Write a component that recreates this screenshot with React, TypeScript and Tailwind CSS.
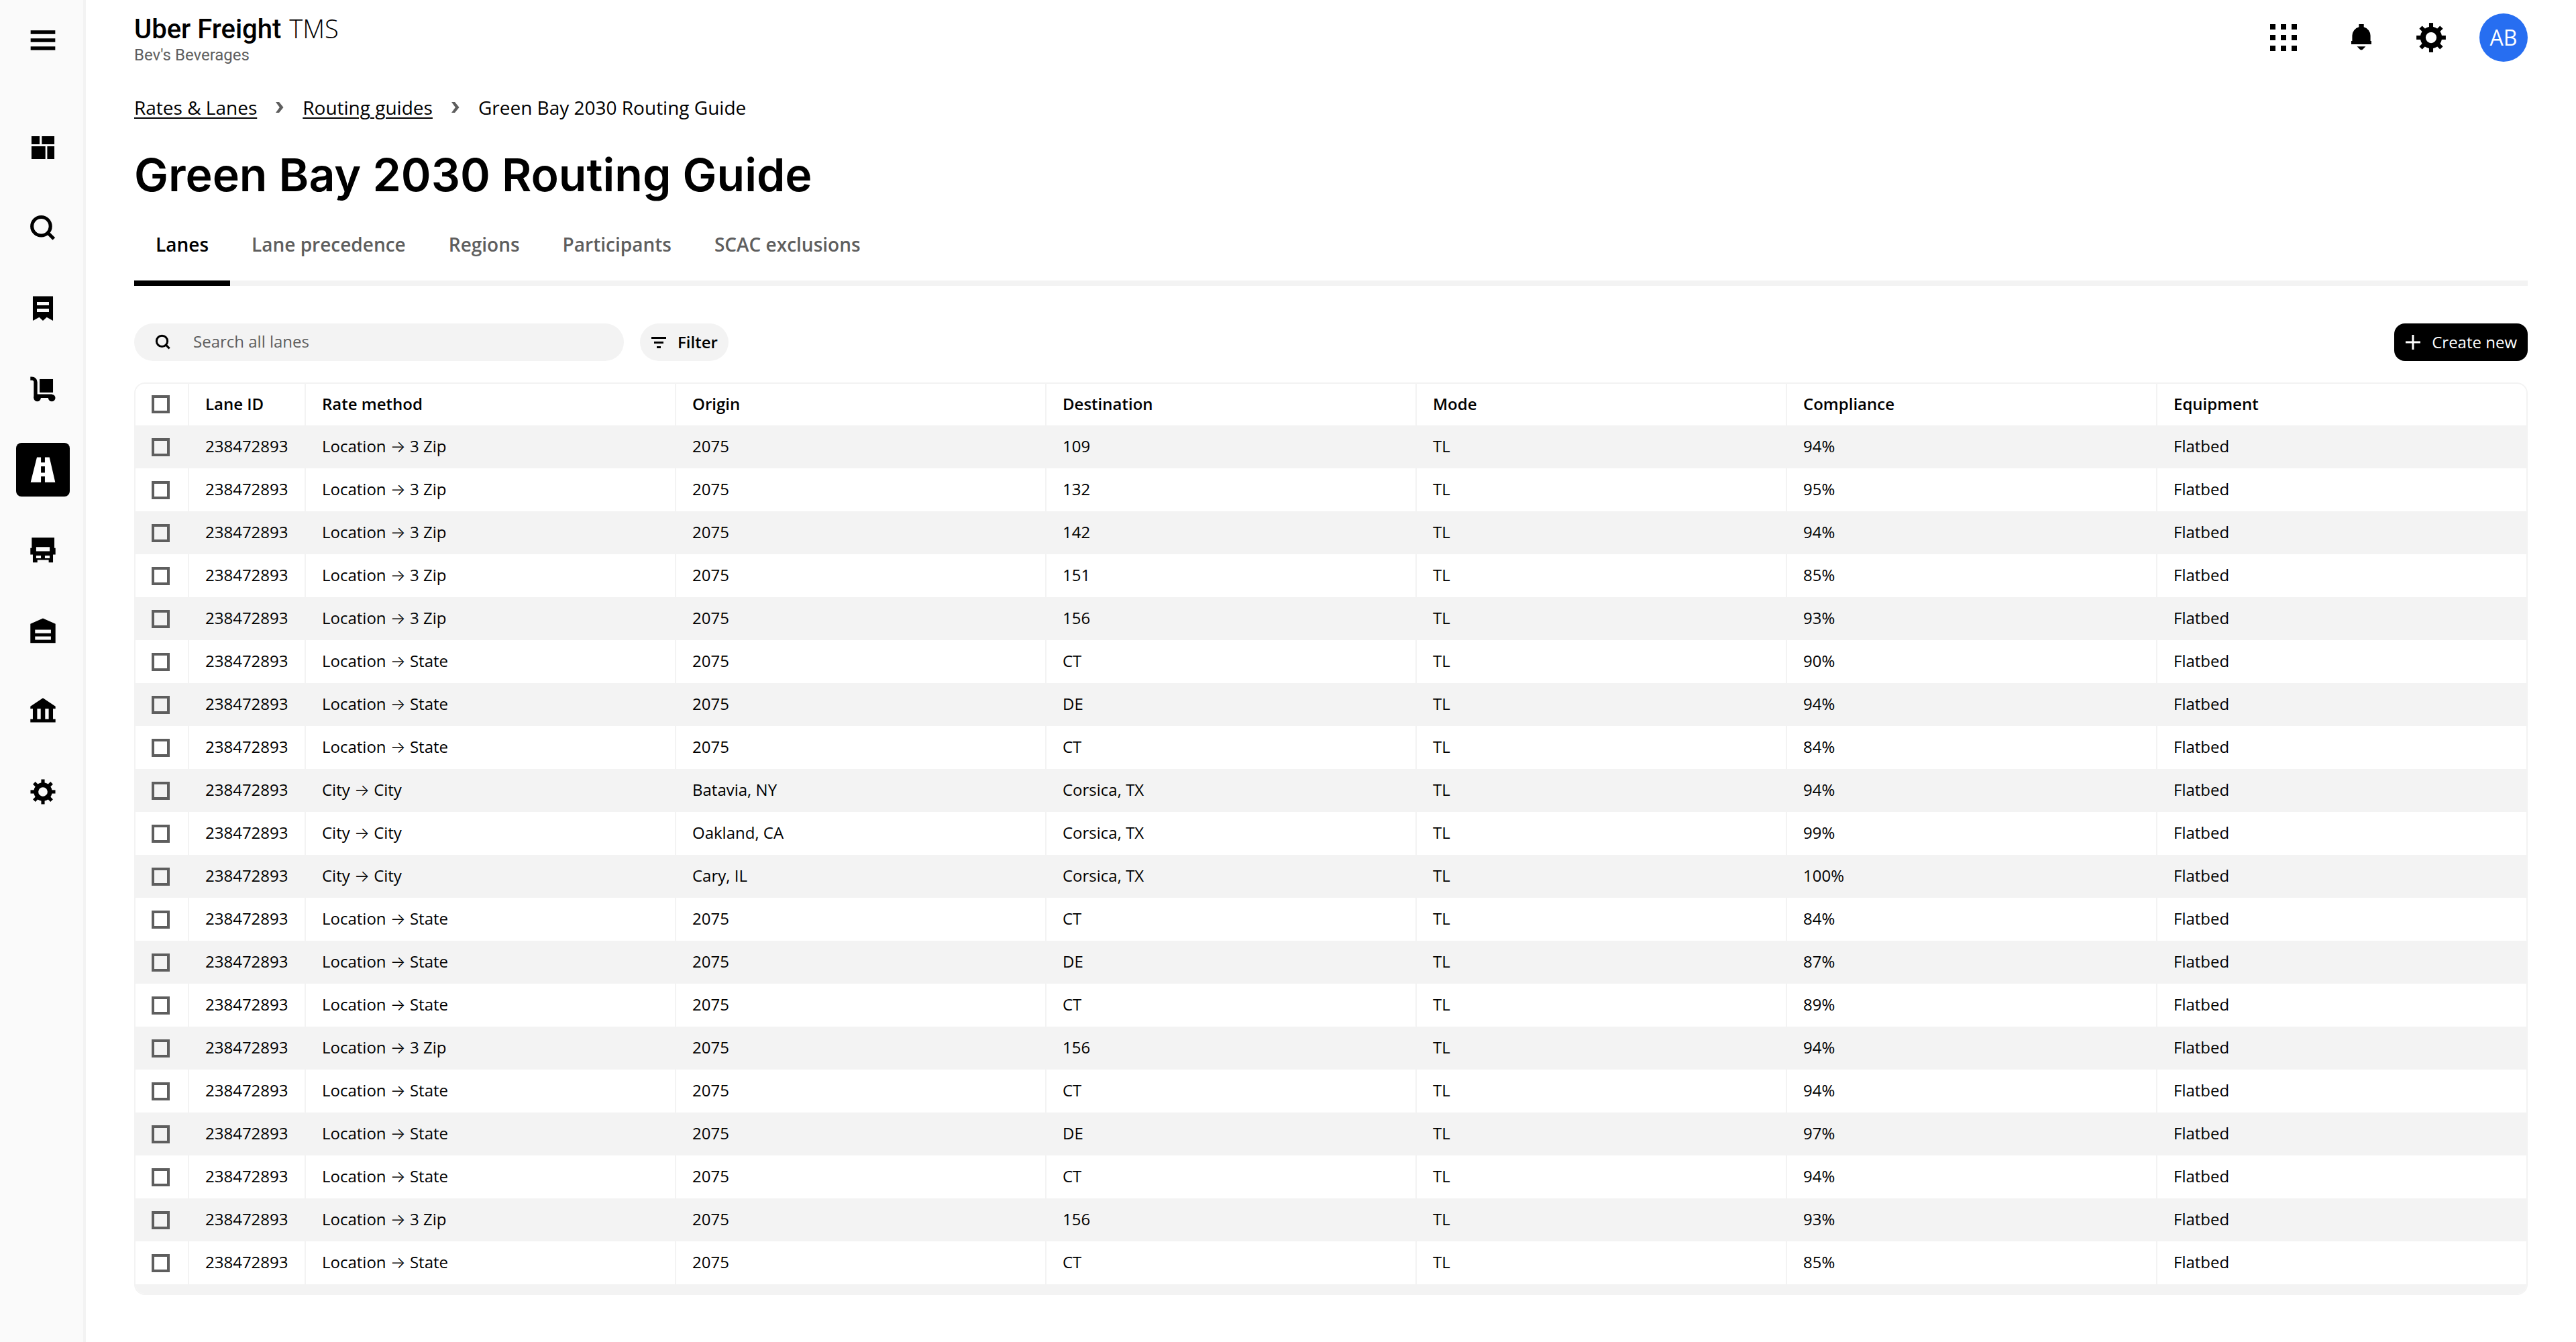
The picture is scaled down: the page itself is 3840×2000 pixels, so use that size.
import type { ReactNode } from "react";

type Lane = {
  method: [string, string];
  origin: string;
  destination: string;
  compliance: string;
};

const LANE_ID = "238472893";
const ZIP: [string, string] = ["Location", "3 Zip"];
const STATE: [string, string] = ["Location", "State"];
const CITY: [string, string] = ["City", "City"];

const lanes: Lane[] = [
  { method: ZIP, origin: "2075", destination: "109", compliance: "94%" },
  { method: ZIP, origin: "2075", destination: "132", compliance: "95%" },
  { method: ZIP, origin: "2075", destination: "142", compliance: "94%" },
  { method: ZIP, origin: "2075", destination: "151", compliance: "85%" },
  { method: ZIP, origin: "2075", destination: "156", compliance: "93%" },
  { method: STATE, origin: "2075", destination: "CT", compliance: "90%" },
  { method: STATE, origin: "2075", destination: "DE", compliance: "94%" },
  { method: STATE, origin: "2075", destination: "CT", compliance: "84%" },
  { method: CITY, origin: "Batavia, NY", destination: "Corsica, TX", compliance: "94%" },
  { method: CITY, origin: "Oakland, CA", destination: "Corsica, TX", compliance: "99%" },
  { method: CITY, origin: "Cary, IL", destination: "Corsica, TX", compliance: "100%" },
  { method: STATE, origin: "2075", destination: "CT", compliance: "84%" },
  { method: STATE, origin: "2075", destination: "DE", compliance: "87%" },
  { method: STATE, origin: "2075", destination: "CT", compliance: "89%" },
  { method: ZIP, origin: "2075", destination: "156", compliance: "94%" },
  { method: STATE, origin: "2075", destination: "CT", compliance: "94%" },
  { method: STATE, origin: "2075", destination: "DE", compliance: "97%" },
  { method: STATE, origin: "2075", destination: "CT", compliance: "94%" },
  { method: ZIP, origin: "2075", destination: "156", compliance: "93%" },
  { method: STATE, origin: "2075", destination: "CT", compliance: "85%" },
];

const columns = ["Lane ID", "Rate method", "Origin", "Destination", "Mode", "Compliance", "Equipment"];
const tabs = ["Lanes", "Lane precedence", "Regions", "Participants", "SCAC exclusions"];

function Icon({ className, children }: { className: string; children: ReactNode }) {
  return (
    <svg viewBox="0 0 24 24" className={className} fill="currentColor" aria-hidden="true">
      {children}
    </svg>
  );
}

function SearchShape() {
  return (
    <>
      <circle cx="10.6" cy="10.5" r="7.5" fill="none" stroke="currentColor" strokeWidth="2.8" />
      <path d="M15.6 15.4 20.9 20.7" stroke="currentColor" strokeWidth="2.8" />
    </>
  );
}

function GearShape() {
  return (
    <>
      <circle cx="12" cy="12" r="5.6" fill="none" stroke="currentColor" strokeWidth="3.7" />
      {[0, 45, 90, 135, 180, 225, 270, 315].map((angle) => (
        <rect key={angle} x="10.6" y="1.9" width="2.8" height="4" transform={`rotate(${angle} 12 12)`} />
      ))}
    </>
  );
}

const navItems: { label: string; active?: boolean; shape: ReactNode }[] = [
  {
    label: "Dashboard",
    shape: <path d="M2.7 2.7h6.6v6.6H2.7zM11.1 2.7h10.2v6.6H11.1zM2.7 10.9H14v10.4H2.7zM15.5 10.9h5.8v10.4h-5.8z" />,
  },
  { label: "Search", shape: <SearchShape /> },
  {
    label: "Invoices",
    shape: (
      <path
        fillRule="evenodd"
        d="M3.8 1.9h16.4v19.9l-5.1-2.8L12 21.8 9 19l-5.2 2.8zM7.1 6.5v2.8h9.8V6.5zM7.1 12v2.7h9.8V12z"
      />
    ),
  },
  {
    label: "Shipments",
    shape: (
      <>
        <path d="M1.8 3.3H3a3 3 0 0 1 3 3v11.3h13.3" fill="none" stroke="currentColor" strokeWidth="2.9" />
        <rect x="9.3" y="3.8" width="10.9" height="10.9" />
        <circle cx="7.4" cy="19.1" r="2.9" />
        <circle cx="19.2" cy="19.1" r="2.9" />
      </>
    ),
  },
  {
    label: "Rates & Lanes",
    active: true,
    shape: <path d="M7.1 1.9h3.3v4.3h3.2V1.9h3.7L22 22.2h-8.4v-4.7h-3.2v4.7H2zM10.4 9.3v5.1h3.2V9.3z" fillRule="evenodd" />,
  },
  {
    label: "Carriers",
    shape: (
      <path
        fillRule="evenodd"
        d="M2.9 1.8h18.4v8.4h.9v5.4h-2v6.3h-3.5v-2H7.5v2H3.8v-6.3h-2v-5.4h1.1zM6.5 9.4v3.4h11V9.4zM6.5 16.3v2.3h3.9v-2.3zM13.6 16.3v2.3h3.9v-2.3z"
      />
    ),
  },
  {
    label: "Facilities",
    shape: (
      <path fillRule="evenodd" d="M12 1.9l10.2 4.5V22H1.8V6.4zM5.6 11.2V14h12.9v-2.8zM5.6 16.6v2.8h12.9v-2.8z" />
    ),
  },
  {
    label: "Finance",
    shape: (
      <path
        fillRule="evenodd"
        d="M12 1.2l10.2 6.9V10h-2v8.4h2V21H1.8v-2.6h2V10h-2V8.1zM7.3 10v8.4h2.9V10zM13.8 10v8.4h2.9V10z"
      />
    ),
  },
  { label: "Settings", shape: <GearShape /> },
];

function Sidebar() {
  return (
    <aside className="flex w-32 shrink-0 flex-col items-center gap-20 border-r-4 border-[#f3f3f3] bg-[#fafafa] pt-5 pl-1">
      <button aria-label="Menu" className="flex size-20 items-center justify-center">
        <Icon className="size-11">
          <path d="M2 4h20v3H2zM2 10.5h20v3H2zM2 17h20v3H2z" />
        </Icon>
      </button>
      <nav className="flex flex-col gap-10">
        {navItems.map((item) =>
          item.active ? (
            <a key={item.label} href="#" aria-label={item.label} aria-current="page" className="flex size-20 items-center justify-center rounded-lg bg-black text-white">
              <Icon className="size-11">{item.shape}</Icon>
            </a>
          ) : (
            <a key={item.label} href="#" aria-label={item.label} className="flex size-20 items-center justify-center rounded-lg">
              <Icon className="size-11">{item.shape}</Icon>
            </a>
          ),
        )}
      </nav>
    </aside>
  );
}

function TopBar() {
  return (
    <header className="flex items-start justify-between">
      <div className="pt-[18px] font-['Roboto',sans-serif]">
        <div className="flex items-baseline gap-3 text-[40px] leading-[48px]">
          <span className="font-medium">Uber Freight</span>
          <span className="font-['Open_Sans',sans-serif] text-[38px] leading-[48px] font-light">TMS</span>
        </div>
        <div className="text-2xl leading-7 text-[#5e5e5e]">Bev's Beverages</div>
      </div>
      <div className="flex items-center pt-5">
        <button aria-label="Apps" className="flex size-12 items-center justify-center">
          <svg viewBox="0 0 40 40" className="size-10" fill="currentColor" aria-hidden="true">
            {[0, 16, 32].map((y) => [0, 16, 32].map((x) => <rect key={`${x}-${y}`} x={x} y={y} width="8" height="8" />))}
          </svg>
        </button>
        <button aria-label="Notifications" className="ml-17 flex size-12 items-center justify-center">
          <svg viewBox="0 0 48 48" className="size-12" fill="currentColor" aria-hidden="true">
            <path d="M20.4 4h7.3v4.2A13.5 13.5 0 0 1 37.6 21v8H39v5H9v-5h1.4v-8a13.5 13.5 0 0 1 10-12.8zM17.6 37.3h12.8L26 41.8q-2 1.2-4 0z" />
          </svg>
        </button>
        <button aria-label="Settings" className="ml-13 flex size-14 items-center justify-center">
          <Icon className="size-13">
            <GearShape />
          </Icon>
        </button>
        <button className="ml-11 flex size-18 items-center justify-center rounded-full bg-[#276ef1] text-[32px] leading-10 text-white">
          AB
        </button>
      </div>
    </header>
  );
}

function Chevron() {
  return (
    <svg viewBox="0 0 12 16" className="mx-7 h-4 w-3 text-[#5e5e5e]" fill="currentColor" aria-hidden="true">
      <path d="M0 0h5l6.5 8L5 16H0l5.8-8z" />
    </svg>
  );
}

function Toolbar() {
  return (
    <div className="mt-14 flex items-center gap-6">
      <label className="flex h-14 w-[730px] items-center gap-8 rounded-full bg-[#f3f3f3] px-[30px]">
        <Icon className="size-[26px] shrink-0">
          <SearchShape />
        </Icon>
        <input
          type="search"
          aria-label="Search all lanes"
          placeholder="Search all lanes"
          className="w-full bg-transparent pb-0.5 text-2xl outline-none placeholder:text-[#5e5e5e]"
        />
      </label>
      <button className="flex h-14 items-center gap-4 rounded-full bg-[#f3f3f3] px-4 text-2xl font-semibold">
        <svg viewBox="0 0 24 24" className="size-6" fill="currentColor" aria-hidden="true">
          <path d="M1 4h22v3H1zM5 11h14v3H5zM9 18h6v3H9z" />
        </svg>
        Filter
      </button>
      <button className="ml-auto flex h-14 items-center gap-4 rounded-2xl bg-black px-4 text-2xl font-medium text-white">
        <svg viewBox="0 0 24 24" className="size-6" fill="none" stroke="currentColor" strokeWidth="3" aria-hidden="true">
          <path d="M12 1v22M1 12h22" />
        </svg>
        Create new
      </button>
    </div>
  );
}

function Tick({ label }: { label: string }) {
  return (
    <input
      type="checkbox"
      aria-label={label}
      className="block size-[27px] appearance-none border-4 border-[#5e5e5e] checked:bg-[#5e5e5e]"
    />
  );
}

function LaneTable() {
  return (
    <div className="mt-8 overflow-hidden rounded-2xl border-2 border-[#f3f3f3]">
      <table className="w-full table-fixed border-separate border-spacing-0 text-left text-2xl">
        <colgroup>
          <col className="w-[78px]" />
          <col className="w-[174px]" />
          <col />
          <col />
          <col />
          <col />
          <col />
          <col />
        </colgroup>
        <thead>
          <tr className="h-[62px]">
            <th className="pb-0.5 pl-6">
              <Tick label="Select all lanes" />
            </th>
            {columns.map((name) => (
              <th key={name} scope="col" className="border-l-2 border-[#f3f3f3] pb-0.5 pl-6 font-semibold">
                {name}
              </th>
            ))}
          </tr>
        </thead>
        <tbody>
          {lanes.map((lane, index) => (
            <tr key={index} className="h-16 odd:bg-[#f3f3f3]">
              <td className="pl-6">
                <Tick label={`Select lane ${index + 1}`} />
              </td>
              <td className="border-l-2 border-[#f3f3f3] pb-0.5 pl-6">{LANE_ID}</td>
              <td className="border-l-2 border-[#f3f3f3] pb-0.5 pl-6">
                {lane.method[0]} <span className="font-['Inter',sans-serif] leading-none font-light">→</span> {lane.method[1]}
              </td>
              <td className="border-l-2 border-[#f3f3f3] pb-0.5 pl-6">{lane.origin}</td>
              <td className="border-l-2 border-[#f3f3f3] pb-0.5 pl-6">{lane.destination}</td>
              <td className="border-l-2 border-[#f3f3f3] pb-0.5 pl-6">TL</td>
              <td className="border-l-2 border-[#f3f3f3] pb-0.5 pl-6">{lane.compliance}</td>
              <td className="border-l-2 border-[#f3f3f3] pb-0.5 pl-6">Flatbed</td>
            </tr>
          ))}
        </tbody>
      </table>
      <div className="h-3.5 bg-[#f3f3f3]" />
    </div>
  );
}

export default function App() {
  return (
    <div className="flex min-h-screen bg-white font-['Open_Sans',sans-serif] text-black">
      <Sidebar />
      <main className="min-w-0 flex-1 pr-18 pb-18 pl-18">
        <TopBar />
        <nav aria-label="Breadcrumb" className="mt-11 flex items-center text-[28px] leading-10 font-medium">
          <a href="#" className="underline decoration-2 underline-offset-4">
            Rates &amp; Lanes
          </a>
          <Chevron />
          <a href="#" className="underline decoration-2 underline-offset-4">
            Routing guides
          </a>
          <Chevron />
          <span aria-current="page">Green Bay 2030 Routing Guide</span>
        </nav>
        <h1 className="mt-9 font-['Inter',sans-serif] text-[68px] leading-[88px] font-semibold">
          Green Bay 2030 Routing Guide
        </h1>
        <div role="tablist" className="mt-10 flex border-b-8 border-[#f3f3f3] text-[28px] leading-10 font-semibold">
          {tabs.map((tab, index) =>
            index === 0 ? (
              <button key={tab} role="tab" aria-selected="true" className="-mb-2 border-b-8 border-black px-8 pb-[34px]">
                {tab}
              </button>
            ) : (
              <button key={tab} role="tab" aria-selected="false" className="px-8 pb-[34px] text-[#5e5e5e]">
                {tab}
              </button>
            ),
          )}
        </div>
        <Toolbar />
        <LaneTable />
      </main>
    </div>
  );
}
